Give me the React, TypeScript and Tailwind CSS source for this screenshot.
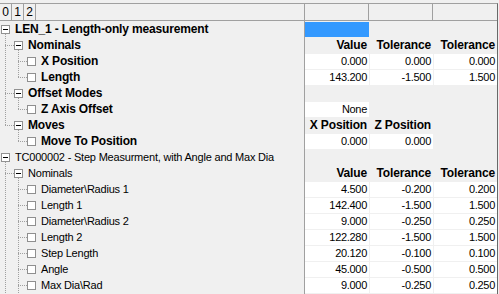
import React from "react";

type Guide = "v" | "t" | "l" | "";
type CellKind = "w" | "h" | "b";
type GridCell = { v?: string; k: CellKind } | null;

type Row = {
  label: string;
  bold?: boolean;
  guides: Guide[];
  node: "box" | "check";
  open?: boolean;
  cells?: GridCell[];
};

const W = (v: string): GridCell => ({ v, k: "w" });
const H = (v: string): GridCell => ({ v, k: "h" });

const ROWS: Row[] = [
  { label: "LEN_1 - Length-only measurement", bold: true, guides: [], node: "box", open: true, cells: [{ k: "b" }] },
  { label: "Nominals", bold: true, guides: ["t"], node: "box", open: true, cells: [H("Value"), H("Tolerance"), H("Tolerance")] },
  { label: "X Position", bold: true, guides: ["v", "t"], node: "check", cells: [W("0.000"), W("0.000"), W("0.000")] },
  { label: "Length", bold: true, guides: ["v", "l"], node: "check", cells: [W("143.200"), W("-1.500"), W("1.500")] },
  { label: "Offset Modes", bold: true, guides: ["t"], node: "box", open: true },
  { label: "Z Axis Offset", bold: true, guides: ["v", "l"], node: "check", cells: [W("None")] },
  { label: "Moves", bold: true, guides: ["l"], node: "box", open: true, cells: [H("X Position"), H("Z Position")] },
  { label: "Move To Position", bold: true, guides: ["", "l"], node: "check", cells: [W("0.000"), W("0.000")] },
  { label: "TC000002 - Step Measurment, with Angle and Max Dia", guides: [], node: "box", open: true },
  { label: "Nominals", guides: ["t"], node: "box", open: true, cells: [H("Value"), H("Tolerance"), H("Tolerance")] },
  { label: "Diameter\\Radius 1", guides: ["v", "t"], node: "check", cells: [W("4.500"), W("-0.200"), W("0.200")] },
  { label: "Length 1", guides: ["v", "t"], node: "check", cells: [W("142.400"), W("-1.500"), W("1.500")] },
  { label: "Diameter\\Radius 2", guides: ["v", "t"], node: "check", cells: [W("9.000"), W("-0.250"), W("0.250")] },
  { label: "Length 2", guides: ["v", "t"], node: "check", cells: [W("122.280"), W("-1.500"), W("1.500")] },
  { label: "Step Length", guides: ["v", "t"], node: "check", cells: [W("20.120"), W("-0.100"), W("0.100")] },
  { label: "Angle", guides: ["v", "t"], node: "check", cells: [W("45.000"), W("-0.500"), W("0.500")] },
  { label: "Max Dia\\Rad", guides: ["v", "t"], node: "check", cells: [W("9.000"), W("-0.250"), W("0.250")] },
];

const COLS = ["w-[65px] pr-px", "w-[64px] pr-px", "w-[63px]"];

const dot = {
  stroke: "#a0a0a0",
  strokeDasharray: "1 1",
  shapeRendering: "crispEdges" as const,
};

// tree connectors, +/- button and state checkbox for one row
function Gutter({ guides, node, open }: { guides: Guide[]; node: "box" | "check"; open?: boolean }) {
  const L = guides.length;
  const ox = 13 * L;
  return (
    <svg width={13 * (L + 1)} height={16} className="block shrink-0">
      {guides.map((g, j) => {
        if (!g) return null;
        const x = 13 * j + 5.5;
        return (
          <g key={j}>
            <line x1={x} y1={0} x2={x} y2={g === "l" ? 8 : 16} {...dot} />
            {g !== "v" && <line x1={13 * j + 5} y1={7.5} x2={ox + 1} y2={7.5} {...dot} />}
          </g>
        );
      })}
      {node === "box" ? (
        <g shapeRendering="crispEdges">
          <rect x={ox + 1.5} y={3.5} width={8} height={8} fill="#fff" stroke="#919191" />
          <line x1={ox + 3} y1={7.5} x2={ox + 8} y2={7.5} stroke="#000" />
          {open && <line x1={ox + 5.5} y1={12} x2={ox + 5.5} y2={16} {...dot} />}
        </g>
      ) : (
        <rect x={ox + 1.5} y={3.5} width={8} height={8} fill="#fff" stroke="#8f8f8f" shapeRendering="crispEdges" />
      )}
    </svg>
  );
}

function Cell({ cell }: { cell: GridCell }) {
  if (!cell) return <div className="h-[15px]" />;
  if (cell.k === "b") return <div className="h-[15px] bg-[#3399ff]" />;
  if (cell.k === "h")
    return (
      <div className="h-[15px] pr-[2px] text-right text-[12px] font-bold leading-[15px] tracking-[-0.15px] whitespace-nowrap">
        {cell.v}
      </div>
    );
  return (
    <div className="h-[15px] bg-white pr-[2px] text-right text-[11px] leading-[15px] tracking-[-0.3px] whitespace-nowrap">
      {cell.v}
    </div>
  );
}

function TreeRow({ row }: { row: Row }) {
  return (
    <div className="flex h-[16px]">
      <div className="flex w-[305px] shrink-0 overflow-hidden border-r border-[#a0a0a0]">
        <Gutter guides={row.guides} node={row.node} open={row.open} />
        <span
          className={
            row.bold
              ? "pl-[2px] text-[12px] font-bold leading-[15px] tracking-[-0.15px] whitespace-nowrap"
              : "pl-[2px] text-[11px] leading-[15px] tracking-[-0.2px] whitespace-nowrap"
          }
        >
          {row.label}
        </span>
      </div>
      {COLS.map((c, i) => (
        <div key={i} className={`${c} shrink-0 h-[16px]`}>
          <Cell cell={row.cells?.[i] ?? null} />
        </div>
      ))}
    </div>
  );
}

export default function App() {
  return (
    <div className="w-[499px] h-[294px] overflow-hidden bg-[#f0f0f0] pt-[3px] font-['Liberation_Sans',Arial,sans-serif] text-black">
      <div className="flex h-[291px] w-[498px] flex-col border-t border-r border-t-[#a0a0a0] border-r-[#696969]">
        {/* header */}
        <div className="flex h-[17px] shrink-0 border-b border-[#a0a0a0]">
          <div className="flex w-[305px] shrink-0 border-r border-[#a0a0a0]">
            {["0", "1", "2"].map((t) => (
              <div key={t} className="w-[12px] border-r border-[#a0a0a0] text-center text-[12px] leading-[16px]">
                {t}
              </div>
            ))}
          </div>
          <div className="w-[64px] shrink-0 border-r border-[#a0a0a0]" />
          <div className="w-[64px] shrink-0 border-r border-[#a0a0a0]" />
          <div className="w-[63px] shrink-0" />
        </div>
        <div className="flex h-px shrink-0">
          <div className="w-[305px] border-r border-[#a0a0a0]" />
        </div>
        {ROWS.map((r, i) => (
          <TreeRow key={i} row={r} />
        ))}
      </div>
    </div>
  );
}
